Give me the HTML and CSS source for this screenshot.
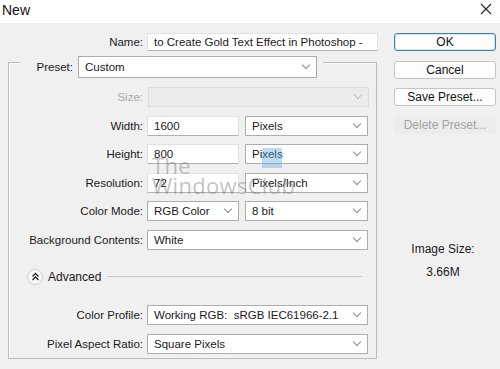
FILE: index.html
```html
<!DOCTYPE html>
<html lang="en">
<head>
  <meta charset="UTF-8">
  <meta name="viewport" content="width=device-width, initial-scale=1.0">
  <title>New</title>
  <link rel="stylesheet" href="styles.css">
</head>
<body>
  <!-- Window title bar -->
  <div class="titlebar">
    <span class="title">New</span>
    <svg class="close" width="12" height="12" viewBox="0 0 12 12">
      <path d="M1 1 L11 11 M11 1 L1 11" stroke="#222" stroke-width="1.1" fill="none"/>
    </svg>
  </div>

  <div class="dialog">
    <div class="main">
      <div class="row name-row">
        <label class="label">Name:</label>
        <div class="field name-field">to Create Gold Text Effect in Photoshop -</div>
      </div>

      <!-- Preset group box -->
      <div class="group">
        <div class="preset-row">
          <label class="preset-label">Preset:</label>
          <div class="select preset-select">Custom</div>
        </div>

        <div class="rows">
          <div class="row">
            <label class="label disabled">Size:</label>
            <div class="select wide disabled-select"></div>
          </div>
          <div class="row">
            <label class="label">Width:</label>
            <div class="field num">1600</div>
            <div class="select unit">Pixels</div>
          </div>
          <div class="row">
            <label class="label">Height:</label>
            <div class="field num">800</div>
            <div class="select unit">Pixels</div>
          </div>
          <div class="row">
            <label class="label">Resolution:</label>
            <div class="field num">72</div>
            <div class="select unit">Pixels/Inch</div>
          </div>
          <div class="row">
            <label class="label">Color Mode:</label>
            <div class="select num">RGB Color</div>
            <div class="select unit">8 bit</div>
          </div>
          <div class="row">
            <label class="label">Background Contents:</label>
            <div class="select wide">White</div>
          </div>
        </div>

        <div class="advanced">
          <span class="adv-icon">
            <svg width="9" height="9" viewBox="0 0 9 9">
              <path d="M1.5 4.5 L4.5 1.5 L7.5 4.5 M1.5 8 L4.5 5 L7.5 8" stroke="#222" stroke-width="1.3" fill="none"/>
            </svg>
          </span>
          <span class="adv-text">Advanced</span>
          <span class="adv-line"></span>
        </div>

        <div class="rows adv-rows">
          <div class="row">
            <label class="label">Color Profile:</label>
            <div class="select wide">Working RGB:&nbsp; sRGB IEC61966-2.1</div>
          </div>
          <div class="row">
            <label class="label">Pixel Aspect Ratio:</label>
            <div class="select wide">Square Pixels</div>
          </div>
        </div>
      </div>
    </div>

    <div class="side">
      <div class="buttons">
        <button class="btn default">OK</button>
        <button class="btn">Cancel</button>
        <button class="btn">Save Preset...</button>
        <button class="btn disabled-btn">Delete Preset...</button>
      </div>
      <div class="image-size">
        <div>Image Size:</div>
        <div class="size-value">3.66M</div>
      </div>
    </div>
  </div>

  <!-- site watermark laid over the dialog -->
  <div class="watermark">
    <span class="wm-the">The</span>
    <span class="wm-name">WindowsClub</span>
    <span class="wm-mark"></span>
  </div>
</body>
</html>
```

FILE: styles.css
```css
/* Photoshop "New" dialog */
body {
  margin: 0;
  background-color: #f0f0f0;
  font-family: "Liberation Sans", Arial, sans-serif;
  font-size: 11.5px;
  color: #1a1a1a;
  position: relative;
  height: 369px;
  overflow: hidden;
}

.titlebar {
  height: 23px;
  background: #ffffff;
  display: flex;
  justify-content: space-between;
  align-items: center;
  padding: 0 8px 0 2px;
}

.title {
  font-size: 14px;
  color: #111;
  margin-top: -4px;
}

.close {
  margin-top: -6px;
}

.dialog {
  display: flex;
  padding-top: 10px;
}

.main {
  width: 378px;
}

.row {
  display: flex;
  align-items: center;
  height: 20px;
  gap: 4px;
}

.label {
  width: 134px;
  text-align: right;
}

.name-row {
  height: 18px;
}

.name-row .label {
  width: 143px;
}

.field,
.select {
  height: 100%;
  box-sizing: border-box;
  background: #ffffff;
  border: 1px solid #c6c6c6;
  display: flex;
  align-items: center;
  padding: 0 7px 0 6px;
  white-space: nowrap;
  overflow: hidden;
}

.name-field {
  width: 231px;
  border-color: #e2e2e2;
  border-bottom-color: #b5b5b5;
}

.select {
  border-color: #adadad;
}

.select::after {
  content: "";
  width: 5px;
  height: 5px;
  border-right: 1px solid #8a8a8a;
  border-bottom: 1px solid #8a8a8a;
  transform: rotate(45deg);
  margin: -4px 0 0 auto;
  flex-shrink: 0;
}

.group {
  margin: 11px 0 0 8px;
  width: 369px;
  height: 297px;
  box-sizing: border-box;
  border: 1px solid #bdbdbd;
  box-shadow: inset 1px 1px 0 #fafafa;
}

.preset-row {
  display: flex;
  align-items: center;
  gap: 5px;
  width: fit-content;
  height: 22px;
  margin: -7px 0 0 11px;
  padding-right: 6px;
  background: #f0f0f0;
}

.preset-label {
  width: 53px;
  text-align: right;
}

.preset-select {
  width: 239px;
}

.rows {
  display: flex;
  flex-direction: column;
  gap: 8.6px;
  margin-top: 9px;
}

.wide {
  width: 221px;
}

.num {
  width: 92px;
}

.unit {
  width: 123px;
  margin-left: 2px;
}

.field.num {
  border-color: #e2e2e2;
  border-bottom-color: #b0b0b0;
}

.disabled {
  color: #a8a8a8;
}

.disabled-select {
  background: #ebebeb;
  border-color: #dcdcdc;
  margin-left: 1px;
}

.disabled-select::after {
  border-color: #c0c0c0;
}

.advanced {
  display: flex;
  align-items: center;
  height: 16px;
  margin: 19px 0 0 18px;
}

.adv-icon {
  width: 14px;
  height: 14px;
  border-radius: 50%;
  border: 1px solid #cfcfcf;
  background: #f8f8f8;
  display: flex;
  align-items: center;
  justify-content: center;
}

.adv-text {
  margin-left: 5px;
  font-size: 12px;
}

.adv-line {
  width: 255px;
  height: 1px;
  background: #c8c8c8;
  margin-left: 6px;
}

.adv-rows {
  margin-top: 20px;
}

.side {
  margin-left: 16px;
  width: 102px;
}

.buttons {
  display: flex;
  flex-direction: column;
  gap: 9.5px;
}

.btn {
  height: 18px;
  padding: 0;
  font-family: inherit;
  font-size: 12px;
  color: #111;
  background: #fdfdfd;
  border: 1px solid #c4c4c4;
  border-radius: 3px;
}

.btn.default {
  border-color: #3d7fb0;
  box-shadow: inset 0 0 0 1px #d6e6f3;
}

.disabled-btn {
  color: #a3a3a3;
  background: #ececec;
  border-color: #ececec;
}

.image-size {
  margin-top: 108px;
  text-align: center;
  font-size: 12px;
  padding-right: 4px;
}

.size-value {
  margin-top: 9px;
}

/* watermark */
.watermark {
  position: absolute;
  left: 150px;
  top: 150px;
  width: 150px;
  height: 50px;
  pointer-events: none;
}

.wm-the,
.wm-name {
  position: absolute;
  left: 2px;
  font-family: "Open Sans", sans-serif;
  font-size: 22px;
  color: rgba(120, 120, 120, 0.45);
  letter-spacing: 0.3px;
}

.wm-the {
  top: 0;
}

.wm-name {
  top: 20px;
}

.wm-mark {
  position: absolute;
  left: 112px;
  top: -2px;
  width: 20px;
  height: 20px;
  background: rgba(90, 170, 230, 0.4);
}
```
